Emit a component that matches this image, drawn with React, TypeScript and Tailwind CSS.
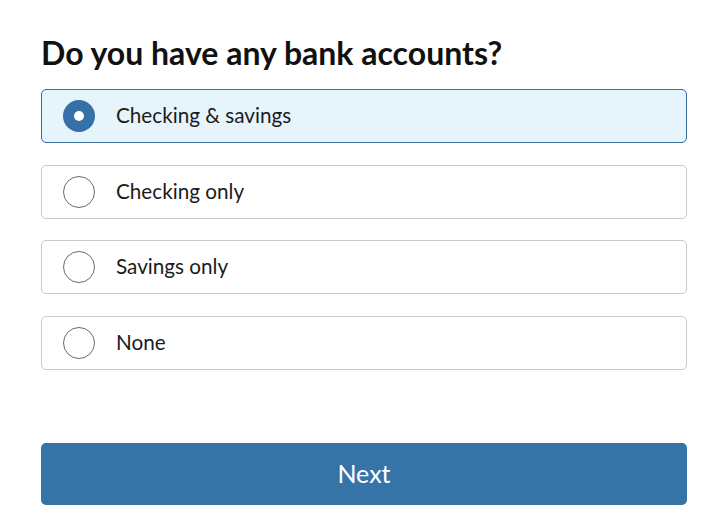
import { useState } from "react";

const options = ["Checking & savings", "Checking only", "Savings only", "None"];

function RadioRow({
  label,
  selected,
  onSelect,
}: {
  label: string;
  selected: boolean;
  onSelect: () => void;
}) {
  return (
    <button
      type="button"
      onClick={onSelect}
      className={
        selected
          ? "flex h-[54px] w-full items-center rounded-[5px] border border-[#3c6f99] bg-[#e6f4fc] pl-[21px] text-left"
          : "flex h-[54px] w-full items-center rounded-[5px] border border-[#c9c9c9] bg-white pl-[21px] text-left"
      }
    >
      {selected ? (
        <span className="flex h-[32px] w-[32px] items-center justify-center rounded-full bg-[#3570a6]">
          <span className="h-[10px] w-[10px] rounded-full bg-white" />
        </span>
      ) : (
        <span className="h-[32px] w-[32px] rounded-full border-[1.5px] border-[#6b6b6b] bg-white" />
      )}
      <span className="ml-[21px] text-[20.7px] text-[#1b1b1b]">{label}</span>
    </button>
  );
}

export default function App() {
  const [choice, setChoice] = useState(0);

  return (
    <main
      className="min-h-[527px] w-full bg-white pl-[41px] pr-[36px] pt-[32px]"
      style={{ fontFamily: "Lato, 'Open Sans', sans-serif" }}
    >
      <h1 className="text-[32px] font-bold leading-[42px] text-[#111]">
        Do you have any bank accounts?
      </h1>

      <div className="mt-[15px] flex flex-col gap-[21.5px]">
        {options.map((o, i) => (
          <RadioRow
            key={o}
            label={o}
            selected={choice === i}
            onSelect={() => setChoice(i)}
          />
        ))}
      </div>

      <button
        type="button"
        className="mt-[73px] flex h-[62px] w-full items-center justify-center rounded-[5px] bg-[#3674a8] text-[25px] text-white"
      >
        Next
      </button>
    </main>
  );
}
